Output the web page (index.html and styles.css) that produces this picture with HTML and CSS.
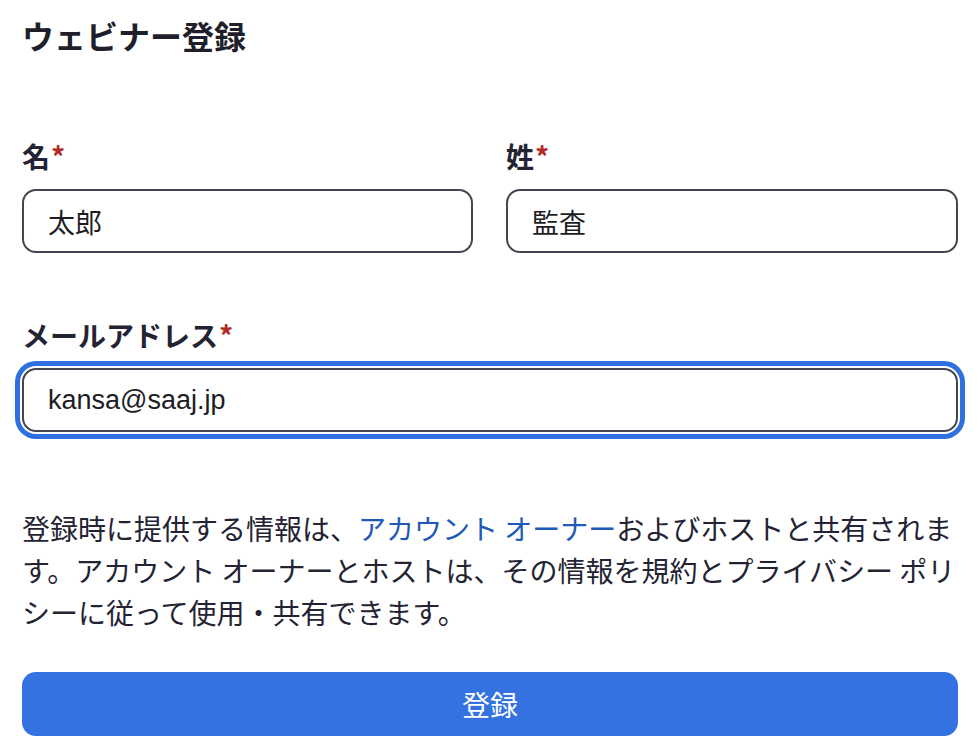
FILE: index.html
```html
<!DOCTYPE html>
<html lang="ja">
<head>
<meta charset="utf-8">
<title>ウェビナー登録</title>
<link rel="stylesheet" href="styles.css">
</head>
<body>
<main class="page">
  <h1 class="title">ウェビナー登録</h1>
  <div class="row">
    <div class="field">
      <label class="label">名<span class="req">*</span></label>
      <div class="input">太郎</div>
    </div>
    <div class="field">
      <label class="label">姓<span class="req">*</span></label>
      <div class="input">監査</div>
    </div>
  </div>
  <div class="field email">
    <label class="label">メールアドレス<span class="req">*</span></label>
    <div class="input focused latin">kansa@saaj.jp</div>
  </div>
  <p class="notice">登録時に提供する情報は、<a class="link" href="#">アカウント オーナー</a>およびホストと共有されます。アカウント オーナーとホストは、その情報を規約とプライバシー ポリシーに従って使用・共有できます。</p>
  <button class="submit">登録</button>
</main>
</body>
</html>
```
FILE: styles.css
```css
html, body {
  margin: 0;
  padding: 0;
  background: #ffffff;
}
body {
  font-family: "Noto Sans CJK JP", "Liberation Sans", sans-serif;
  color: #232333;
}
.page {
  width: 936px;
  padding: 15px 20px 0 22px;
  display: flex;
  flex-direction: column;
}
.title {
  margin: 0;
  font-size: 32px;
  line-height: 40px;
  font-weight: 700;
  color: #1f1f2b;
}
.row {
  margin-top: 83px;
  display: grid;
  grid-template-columns: 451px 452px;
  column-gap: 33px;
}
.field {
  display: flex;
  flex-direction: column;
  gap: 15px;
}
.email {
  margin-top: 64px;
}
.label {
  font-size: 28px;
  line-height: 36px;
  font-weight: 700;
  color: #232333;
}
.req {
  color: #b22a22;
  margin-left: 1px;
}
.input {
  box-sizing: border-box;
  height: 64px;
  border: 2px solid #43464f;
  border-radius: 14px;
  padding: 0 24px;
  display: flex;
  align-items: center;
  font-size: 27px;
  color: #1d1d24;
  background: #fff;
}
.latin {
  font-family: "Liberation Sans", "Noto Sans CJK JP", sans-serif;
}
.focused {
  box-shadow: 0 0 0 2px #ffffff, 0 0 0 7px #2f6fdf;
}
.notice {
  margin: 75px 0 0 0;
  font-size: 28px;
  line-height: 42px;
  color: #232333;
}
.link {
  color: #2159b8;
  text-decoration: none;
}
.submit {
  margin-top: 39px;
  height: 64px;
  border: none;
  border-radius: 14px;
  background: #3372e0;
  color: #ffffff;
  font-family: "Noto Sans CJK JP", sans-serif;
  font-size: 28px;
  font-weight: 400;
  line-height: 1;
  padding: 0;
}
```
